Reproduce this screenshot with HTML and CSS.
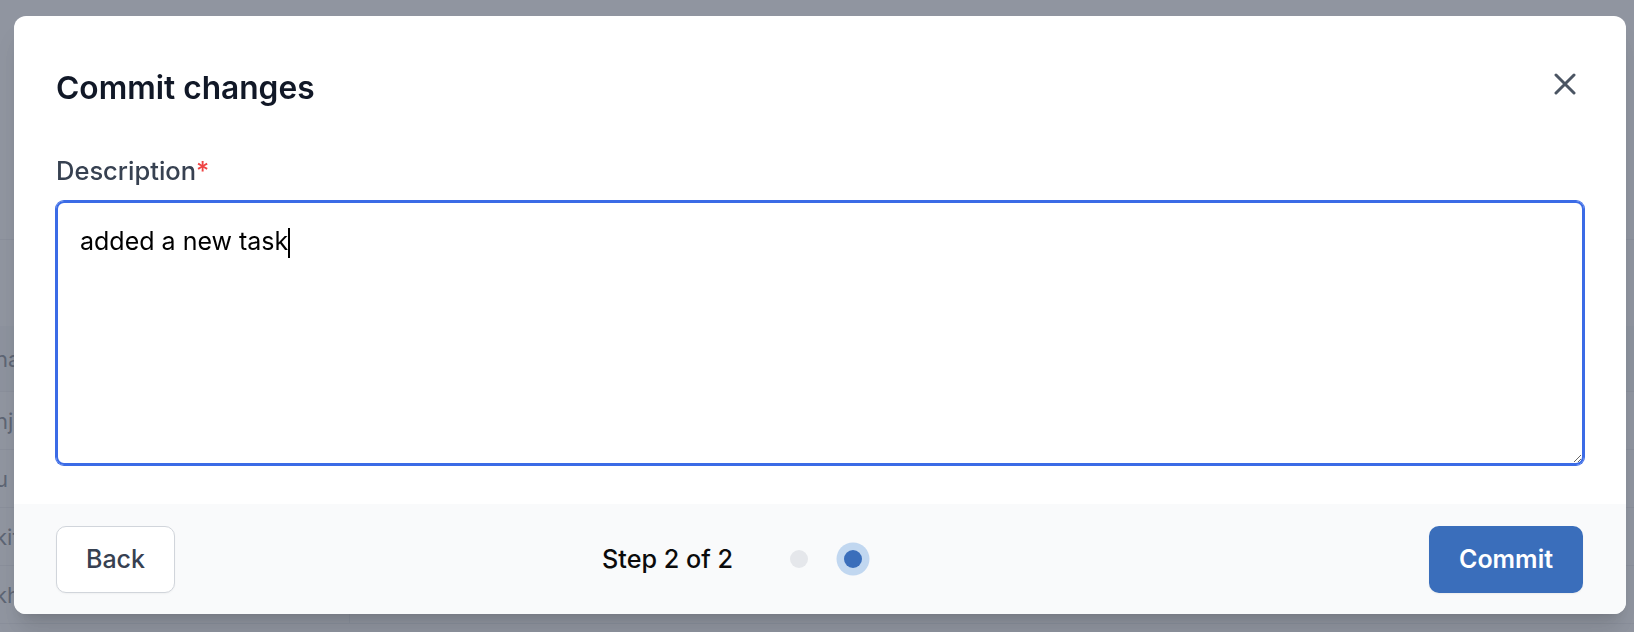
FILE: index.html
```html
<!DOCTYPE html>
<html lang="en">
<head>
<meta charset="utf-8">
<title>Commit changes</title>
<link rel="stylesheet" href="styles.css">
</head>
<body>
<div class="page">
  <div class="page-top"></div>
  <div class="table">
    <div class="row row-head"><div class="cell-first">na</div><div class="cell-rest"></div></div>
    <div class="row"><div class="cell-first">nj</div><div class="cell-rest"></div></div>
    <div class="row"><div class="cell-first">u</div><div class="cell-rest"></div></div>
    <div class="row"><div class="cell-first">kit</div><div class="cell-rest"></div></div>
    <div class="row"><div class="cell-first">kh</div><div class="cell-rest"></div></div>
  </div>
</div>
<div class="overlay"></div>
<div class="modal" role="dialog" aria-labelledby="modal-title">
  <div class="modal-body">
    <div class="modal-header">
      <h2 id="modal-title" class="modal-title">Commit changes</h2>
      <button class="close-btn" aria-label="Close">
        <svg width="22" height="22" viewBox="0 0 22 22" fill="none" stroke="currentColor" stroke-width="3" stroke-linecap="round"><path d="M2 2 L20 20 M20 2 L2 20"/></svg>
      </button>
    </div>
    <label class="field-label">Description<span class="req">*</span></label>
    <div class="textarea">added a new task<span class="caret"></span></div>
  </div>
  <div class="modal-footer">
    <button class="btn btn-back">Back</button>
    <div class="steps">
      <span class="step-text">Step 2 of 2</span>
      <span class="dot-wrap"><span class="dot"></span></span>
      <span class="dot-wrap"><span class="dot dot-active"></span></span>
    </div>
    <button class="btn btn-commit">Commit</button>
  </div>
</div>
</body>
</html>
```
FILE: styles.css
```css
* { box-sizing: border-box; }
html, body { margin: 0; padding: 0; }
body {
  width: 1634px;
  height: 632px;
  overflow: hidden;
  background: #ffffff;
  font-family: Inter, "Noto Sans", "Liberation Sans", sans-serif;
}
.page { width: 100%; height: 100%; }
.page-top { height: 240px; border-bottom: 1px solid #e5e7eb; }
.table { padding-top: 86px; }
.row {
  display: flex;
  height: 58px;
  border-bottom: 1px solid #e5e7eb;
  align-items: center;
}
.row-head { height: 66px; background: #f3f4f6; }
.cell-first {
  width: 350px;
  border-right: 1px solid #e5e7eb;
  height: 100%;
  display: flex;
  align-items: center;
  font-size: 22px;
  color: #374151;
  text-indent: -5px;
}
.cell-rest { flex: 1; }
.overlay {
  position: fixed;
  inset: 0;
  background: rgba(107, 114, 128, 0.75);
}
.modal {
  position: fixed;
  left: 14px;
  top: 16px;
  width: 1612px;
  height: 598px;
  background: #ffffff;
  border-radius: 12px;
  overflow: hidden;
  display: flex;
  flex-direction: column;
  box-shadow: 0 20px 25px -5px rgba(0,0,0,0.12), 0 8px 10px -6px rgba(0,0,0,0.1);
}
.modal-body {
  flex: 1;
  padding: 54px 42px 0 42px;
}
.modal-header {
  display: flex;
  justify-content: space-between;
  align-items: flex-start;
}
.modal-title {
  margin: 0;
  font-size: 31.7px;
  line-height: 36px;
  font-weight: 600;
  color: #111827;
}
.close-btn {
  border: 0;
  background: transparent;
  padding: 0;
  margin: 3px 8px 0 0;
  width: 22px;
  height: 22px;
  color: #4b5563;
  display: flex;
}
.field-label {
  display: block;
  margin-top: 49px;
  font-size: 25.5px;
  line-height: 32px;
  font-weight: 500;
  color: #374151;
}
.req { color: #ef4444; }
.textarea {
  margin-top: 14px;
  height: 264px;
  border: 2px solid #3b6be6;
  box-shadow: 0 0 0 1px #3b6be6;
  border-radius: 8px;
  padding: 20px 22px;
  font-size: 25px;
  line-height: 36px;
  color: #000000;
  resize: both;
  overflow: auto;
}
.caret {
  display: inline-block;
  width: 2px;
  height: 30px;
  background: #000;
  vertical-align: -8px;
}
.modal-footer {
  height: 110px;
  background: #f9fafb;
  padding: 0 42px;
  display: flex;
  align-items: center;
}
.btn {
  height: 67px;
  border-radius: 10px;
  font-family: inherit;
  font-size: 25px;
  cursor: pointer;
}
.btn-back {
  background: #ffffff;
  border: 1px solid #d1d5db;
  color: #374151;
  font-weight: 500;
  padding: 0 29px;
  box-shadow: 0 1px 2px rgba(0,0,0,0.04);
}
.btn-commit {
  margin-left: auto;
  margin-right: 1px;
  background: #3a6ebb;
  border: 0;
  color: #ffffff;
  font-weight: 600;
  padding: 0 30px;
  box-shadow: 0 1px 2px rgba(0,0,0,0.06);
}
.steps {
  margin-left: 427px;
  display: flex;
  align-items: center;
}
.step-text {
  font-size: 25.2px;
  font-weight: 500;
  color: #0b0b0b;
  margin-right: 50px;
}
.dot-wrap {
  width: 33px;
  height: 33px;
  display: flex;
  align-items: center;
  justify-content: center;
}
.dot-wrap + .dot-wrap { margin-left: 21px; }
.dot {
  width: 18px;
  height: 18px;
  border-radius: 50%;
  background: #e5e7eb;
}
.dot-active {
  background: #3a6ebb;
  box-shadow: 0 0 0 7.5px #c1d7f0;
}
```
